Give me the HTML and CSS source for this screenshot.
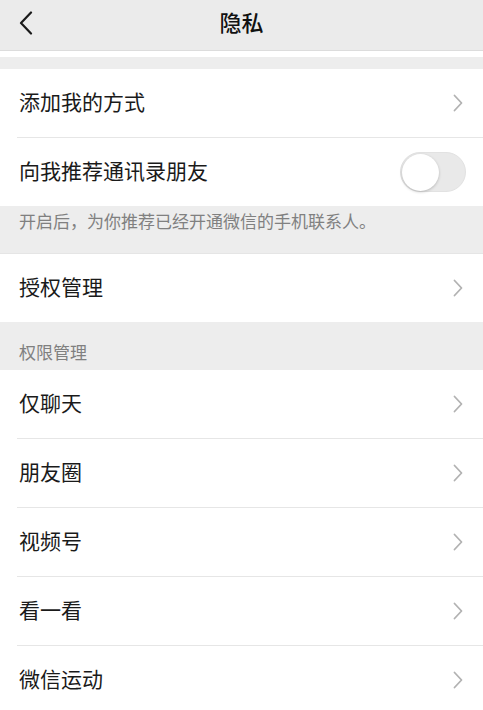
FILE: index.html
```html
<!DOCTYPE html>
<html lang="zh-CN">
<head>
<meta charset="utf-8">
<title>隐私</title>
<link rel="stylesheet" href="styles.css">
</head>
<body>
<div class="page">
  <header class="navbar">
    <span class="back">
      <svg width="14" height="24" viewBox="0 0 14 24"><path d="M12 1.5 L2 12 L12 22.5" fill="none" stroke="#1a1a1a" stroke-width="2.2" stroke-linecap="round" stroke-linejoin="round"/></svg>
    </span>
    <h1 class="title">隐私</h1>
  </header>
  <div class="strip"></div>
  <div class="gap-top"></div>

  <section class="group">
    <div class="cell">
      <div class="cell-body">
        <span class="label">添加我的方式</span>
        <svg class="chev" width="10" height="18" viewBox="0 0 10 18"><path d="M1.5 1.5 L8.5 9 L1.5 16.5" fill="none" stroke="#b2b2b2" stroke-width="1.8" stroke-linecap="round" stroke-linejoin="round"/></svg>
      </div>
    </div>
    <div class="cell">
      <div class="cell-body last switch-body">
        <span class="label">向我推荐通讯录朋友</span>
        <span class="switch"><span class="knob"></span></span>
      </div>
    </div>
  </section>

  <p class="footnote">开启后，为你推荐已经开通微信的手机联系人。</p>

  <section class="group bordered">
    <div class="cell">
      <div class="cell-body last">
        <span class="label">授权管理</span>
        <svg class="chev" width="10" height="18" viewBox="0 0 10 18"><path d="M1.5 1.5 L8.5 9 L1.5 16.5" fill="none" stroke="#b2b2b2" stroke-width="1.8" stroke-linecap="round" stroke-linejoin="round"/></svg>
      </div>
    </div>
  </section>

  <p class="section-title">权限管理</p>

  <section class="group">
    <div class="cell">
      <div class="cell-body">
        <span class="label">仅聊天</span>
        <svg class="chev" width="10" height="18" viewBox="0 0 10 18"><path d="M1.5 1.5 L8.5 9 L1.5 16.5" fill="none" stroke="#b2b2b2" stroke-width="1.8" stroke-linecap="round" stroke-linejoin="round"/></svg>
      </div>
    </div>
    <div class="cell">
      <div class="cell-body">
        <span class="label">朋友圈</span>
        <svg class="chev" width="10" height="18" viewBox="0 0 10 18"><path d="M1.5 1.5 L8.5 9 L1.5 16.5" fill="none" stroke="#b2b2b2" stroke-width="1.8" stroke-linecap="round" stroke-linejoin="round"/></svg>
      </div>
    </div>
    <div class="cell">
      <div class="cell-body">
        <span class="label">视频号</span>
        <svg class="chev" width="10" height="18" viewBox="0 0 10 18"><path d="M1.5 1.5 L8.5 9 L1.5 16.5" fill="none" stroke="#b2b2b2" stroke-width="1.8" stroke-linecap="round" stroke-linejoin="round"/></svg>
      </div>
    </div>
    <div class="cell">
      <div class="cell-body">
        <span class="label">看一看</span>
        <svg class="chev" width="10" height="18" viewBox="0 0 10 18"><path d="M1.5 1.5 L8.5 9 L1.5 16.5" fill="none" stroke="#b2b2b2" stroke-width="1.8" stroke-linecap="round" stroke-linejoin="round"/></svg>
      </div>
    </div>
    <div class="cell">
      <div class="cell-body">
        <span class="label">微信运动</span>
        <svg class="chev" width="10" height="18" viewBox="0 0 10 18"><path d="M1.5 1.5 L8.5 9 L1.5 16.5" fill="none" stroke="#b2b2b2" stroke-width="1.8" stroke-linecap="round" stroke-linejoin="round"/></svg>
      </div>
    </div>
  </section>
</div>
</body>
</html>
```

FILE: styles.css
```css
* { box-sizing: border-box; }
html, body {
  margin: 0;
  padding: 0;
  background: #ededed;
}
body {
  font-family: "Noto Sans CJK SC", "Noto Sans", sans-serif;
  color: #1a1a1a;
}
.page {
  width: 483px;
  min-height: 710px;
  background: #ededed;
}
.navbar {
  height: 51px;
  background: #ebebeb;
  border-bottom: 1px solid #dcdcdc;
  display: flex;
  align-items: center;
  justify-content: center;
  position: relative;
}
.back {
  position: absolute;
  left: 19px;
  top: 11px;
  display: flex;
}
.title {
  margin: 0;
  font-size: 22px;
  font-weight: 500;
  line-height: 30px;
  padding-bottom: 8px;
  color: #111;
}
.strip {
  height: 6px;
  background: #fff;
}
.gap-top {
  height: 12px;
}
.group {
  background: #fff;
}
.group.bordered {
  border-top: 1px solid #e5e5e5;
}
.cell {
  padding-left: 17px;
}
.cell-body {
  height: 69px;
  display: flex;
  align-items: center;
  justify-content: space-between;
  padding-right: 20px;
  border-bottom: 1px solid #e6e6e6;
}
.cell-body.last {
  height: 68px;
  border-bottom: none;
}
.switch-body {
  padding-right: 17px;
}
.label {
  font-size: 21px;
  line-height: 28px;
  padding-left: 2px;
  padding-bottom: 5px;
  color: #1a1a1a;
}
.chev {
  display: block;
  margin-bottom: 1px;
}
.switch {
  width: 66px;
  height: 40px;
  border-radius: 20px;
  background: #e9e9e9;
  border: 1px solid #e2e2e2;
  display: flex;
  align-items: center;
  padding-left: 1px;
}
.knob {
  width: 37px;
  height: 37px;
  border-radius: 50%;
  background: #fff;
  box-shadow: 0 1px 3px rgba(0, 0, 0, 0.22);
}
.footnote {
  margin: 0;
  height: 47px;
  padding: 3px 0 0 19px;
  font-size: 17px;
  line-height: 24px;
  color: #808080;
}
.section-title {
  margin: 0;
  height: 48px;
  padding: 18px 0 0 19px;
  font-size: 17px;
  line-height: 24px;
  color: #808080;
}
```
